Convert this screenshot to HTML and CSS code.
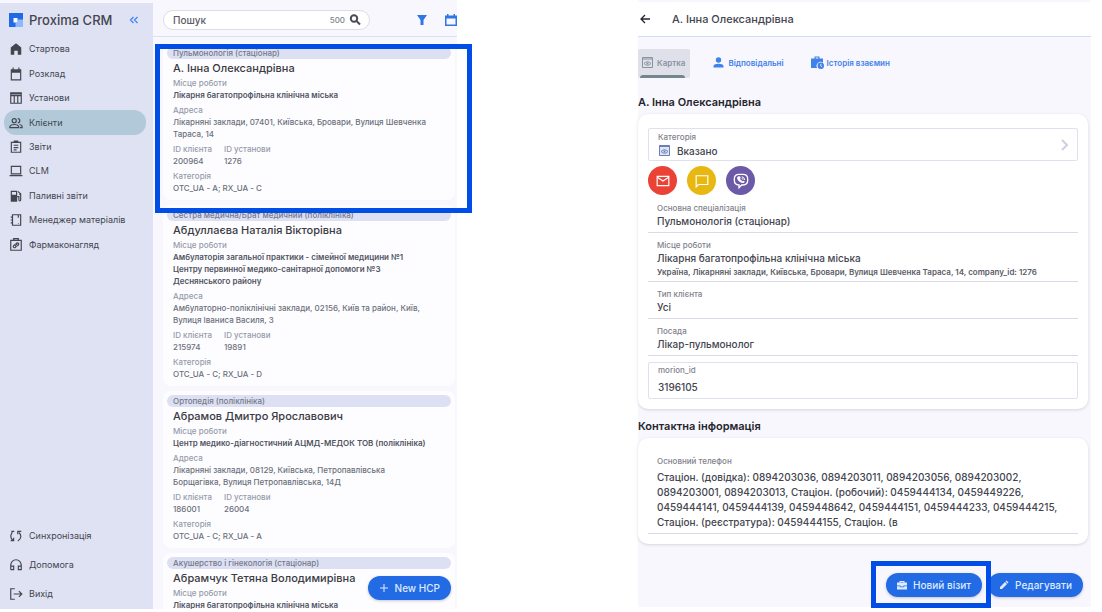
FILE: index.html
```html
<!DOCTYPE html>
<html lang="uk">
<head>
<meta charset="utf-8">
<title>Proxima CRM</title>
<link rel="stylesheet" href="styles.css">
</head>
<body>
<div class="app">
  <aside class="sidebar">
    <div class="brand">
      <svg class="brand-logo" viewBox="0 0 14 14"><path fill="#1f6ae6" d="M0 0h14v14H0z"/><path fill="#8fb8fa" d="M8.500 6.500H14V14H6.500V9.500h2z"/><path fill="#fff" d="M4.500 5h4v4.500h-4z"/></svg>
      <span class="brand-name">Proxima CRM</span>
      <button class="icon-button collapse" aria-label="Згорнути меню"><svg viewBox="0 0 10 10" class="icon-collapse"><path d="M4.500 2 1.500 5l3 3M8.500 2l-3 3 3 3"/></svg></button>
    </div>
    <nav class="menu">
      <a href="#"><svg class="icon" viewBox="0 0 24 24"><path fill="currentColor" d="M3 22V9.500L12 2l9 7.500V22h-6v-7H9v7z"/></svg>Стартова</a>
      <a href="#"><svg class="icon" viewBox="0 0 24 24"><path fill="currentColor" d="M3 4h3V1h2v3h8V1h2v3h3v19H3zm2 6v11h14V10z" fill-rule="evenodd"/></svg>Розклад</a>
      <a href="#"><svg class="icon line" viewBox="0 0 24 24"><path d="M3 3h18v18H3zM3 8h18M9 8v13M15 8v13M3 5h18"/></svg>Установи</a>
      <a href="#" class="active"><svg class="icon line" viewBox="0 0 24 24"><circle cx="9" cy="8" r="3.500"/><path d="M15 4.500a3.500 3.500 0 0 1 0 7M1.500 20v-2.500C3 15 6 14.500 9 14.500s6 .5 7.500 3V20zM18 14.500c2.500.5 4.500 1.500 4.500 3V20h-4"/></svg>Клієнти</a>
      <a href="#"><svg class="icon line" viewBox="0 0 24 24"><path d="M4 4h16v17H4zM9 4V2h6v2M8 9h8M8 13h8M8 17h5"/></svg>Звіти</a>
      <a href="#"><svg class="icon line" viewBox="0 0 24 24"><path d="M4 4h16v13H4zM1 20h22"/></svg>CLM</a>
      <a href="#"><svg class="icon" viewBox="0 0 24 24"><path fill="currentColor" fill-rule="evenodd" d="M3 3h11v19H3zm2 2v5h7V5z"/><path fill="none" stroke="currentColor" stroke-width="2" d="m15 4 5 4v11c0 2-3 2-3 0v-6h-3M20 9h-3"/></svg>Паливні звіти</a>
      <a href="#"><svg class="icon line" viewBox="0 0 24 24"><path d="M6 3h14v18H6zM3 7h4M3 12h4M3 17h4M16 3v5M16 18h1"/></svg>Менеджер матеріалів</a>
      <a href="#"><svg class="icon line" viewBox="0 0 24 24"><path d="M3 4h18v17H3zM8 4V1h8v3"/><path d="m11 11 2-2c2-2 5 1 3 3l-2 2M13 14l-2 2c-2 2-5-1-3-3l2-2M10 14l4-4"/></svg>Фармаконагляд</a>
    </nav>
    <nav class="menu menu-bottom">
      <a href="#"><svg class="icon line" viewBox="0 0 24 24"><path d="M9 4H5v3C2 11 3 16 7 20M3 20h5v-5M15 20h1c5-4 6-9 1-14M15 9V4h6"/></svg>Синхронізація</a>
      <a href="#"><svg class="icon line" viewBox="0 0 24 24"><path d="M3 20v-8a9 9 0 0 1 18 0v8h-5v-6h5M3 14h5v6H3"/></svg>Допомога</a>
      <a href="#"><svg class="icon line" viewBox="0 0 24 24"><path d="M10 3H3v18h7M8 12h13M17 7l5 5-5 5"/></svg>Вихід</a>
    </nav>
  </aside>

  <main class="clients">
    <header class="toolbar">
      <label class="search">
        <input type="text" placeholder="Пошук" aria-label="Пошук">
        <span class="search-count">500</span>
        <svg class="icon-search" viewBox="0 0 12 12"><circle cx="5" cy="4.500" r="3.200"/><path d="m7.500 7 3.500 3.500"/></svg>
      </label>
      <button class="icon-button filter" aria-label="Фільтр"><svg class="icon-filter" viewBox="0 0 12 12"><path fill="currentColor" d="M1 1h10L7.500 6v5h-3V6z"/></svg></button>
      <button class="icon-button calendar" aria-label="Календар"><svg class="icon-calendar" viewBox="0 0 12 12"><path fill="currentColor" fill-rule="evenodd" d="M0 1.500h2V0h1.500v1.500h5V0H10v1.500h2V12H0zm1.500 3v6h9v-6z"/></svg></button>
    </header>
    <div class="list-area">
      <div class="list">
        <article class="client">
          <div class="chip">Пульмонологія (стаціонар)</div>
          <h2>А. Інна Олександрівна</h2>
          <dl>
            <div><dt>Місце роботи</dt><dd class="strong">Лікарня багатопрофільна клінічна міська</dd></div>
            <div><dt>Адреса</dt><dd>Лікарняні заклади, 07401, Київська, Бровари, Вулиця Шевченка Тараса, 14</dd></div>
            <div class="ids"><div><dt>ID клієнта</dt><dd>200964</dd></div><div><dt>ID установи</dt><dd>1276</dd></div></div>
            <div><dt>Категорія</dt><dd>OTC_UA - A; RX_UA - C</dd></div>
          </dl>
        </article>
        <article class="client">
          <div class="chip">Сестра медична/Брат медичний (поліклініка)</div>
          <h2>Абдуллаєва Наталія Вікторівна</h2>
          <dl>
            <div><dt>Місце роботи</dt><dd class="strong">Амбулаторія загальної практики - сімейної медицини №1 Центру первинної медико-санітарної допомоги №3 Деснянського району</dd></div>
            <div><dt>Адреса</dt><dd>Амбулаторно-поліклінічні заклади, 02156, Київ та район, Київ, Вулиця Іваниса Василя, 3</dd></div>
            <div class="ids"><div><dt>ID клієнта</dt><dd>215974</dd></div><div><dt>ID установи</dt><dd>19891</dd></div></div>
            <div><dt>Категорія</dt><dd>OTC_UA - C; RX_UA - D</dd></div>
          </dl>
        </article>
        <article class="client">
          <div class="chip">Ортопедія (поліклініка)</div>
          <h2>Абрамов Дмитро Ярославович</h2>
          <dl>
            <div><dt>Місце роботи</dt><dd class="strong">Центр медико-діагностичний АЦМД-МЕДОК ТОВ (поліклініка)</dd></div>
            <div><dt>Адреса</dt><dd>Лікарняні заклади, 08129, Київська, Петропавлівська Борщагівка, Вулиця Петропавлівська, 14Д</dd></div>
            <div class="ids"><div><dt>ID клієнта</dt><dd>186001</dd></div><div><dt>ID установи</dt><dd>26004</dd></div></div>
            <div><dt>Категорія</dt><dd>OTC_UA - C; RX_UA - A</dd></div>
          </dl>
        </article>
        <article class="client">
          <div class="chip">Акушерство і гінекологія (стаціонар)</div>
          <h2>Абрамчук Тетяна Володимирівна</h2>
          <dl>
            <div><dt>Місце роботи</dt><dd class="strong">Лікарня багатопрофільна клінічна міська</dd></div>
          </dl>
        </article>
      </div>
      <div class="mark mark-client"></div>
      <button class="pill new-client"><svg class="icon-pill" viewBox="0 0 10 10"><path fill="none" stroke="currentColor" d="M5 1v8M1 5h8"/></svg>New HCP</button>
    </div>
  </main>
</div>

<section class="details">
  <header class="details-bar">
    <button class="icon-button" aria-label="Назад"><svg class="icon-back" viewBox="0 0 10 10"><path d="M10 5H1M5 1 1 5l4 4"/></svg></button>
    <h1>А. Інна Олександрівна</h1>
  </header>
  <nav class="tabs">
    <a href="#" class="tab current"><svg class="icon-tab" viewBox="0 0 13 13"><path fill="none" stroke="currentColor" d="M1.500 1.500h10v10h-10zM2 3h9M3 7.500q3.500-3.500 7 0-3.500 3.500-7 0z"/><circle fill="currentColor" cx="6.500" cy="7.500" r="1"/></svg>Картка</a>
    <a href="#" class="tab"><svg class="icon-tab" viewBox="0 0 13 13"><circle fill="currentColor" cx="6.500" cy="4" r="2.700"/><path fill="currentColor" d="M1.500 11.500V10C1.500 7 11.500 7 11.500 10v1.500z"/></svg>Відповідальні</a>
    <a href="#" class="tab"><svg class="icon-tab" viewBox="0 0 13 13"><path fill="currentColor" fill-rule="evenodd" d="M0 2.500h3.500V.5h5v2H12v4.200A4 4 0 0 0 6.200 12H0zm4.700 0h2.600v-1H4.700z"/><circle fill="currentColor" cx="9.800" cy="9.800" r="3.200"/><path fill="none" stroke="#f8f7fd" stroke-width=".8" d="M9.800 8v2l1.300.8"/></svg>Історія взаємин</a>
  </nav>
  <h2 class="section-title">А. Інна Олександрівна</h2>
  <div class="panel">
    <button class="category">
      <span class="field-label">Категорія</span>
      <span class="category-value"><svg class="icon-category" viewBox="0 0 13 13"><path fill="#dfe5f5" d="M1 1h11v11H1z"/><path fill="none" stroke="currentColor" d="M1.500 1.500h10v10h-10zM2 2.500h9M3 7.500q3.500-3.500 7 0-3.500 3.500-7 0z"/><circle fill="currentColor" cx="6.500" cy="7.500" r="1"/></svg>Вказано</span>
      <svg class="icon-next" viewBox="0 0 8 12"><path d="m1 1 5 5-5 5"/></svg>
    </button>
    <div class="channels">
      <button class="channel mail" aria-label="Пошта"><svg viewBox="0 0 24 24"><path d="M2 4h20v16H2zM3 6l9 6 9-6"/></svg></button>
      <button class="channel chat" aria-label="Повідомлення"><svg viewBox="0 0 24 24"><path d="M2 3h20v15H6l-4 4z"/></svg></button>
      <button class="channel viber" aria-label="Viber"><svg viewBox="0 0 24 24"><path d="M9 2h6c5 0 7 2 7 7v2c0 5-2 7-7 7h-2l-4 4v-4c-5 0-7-2-7-7V9c0-5 2-7 7-7z"/><path fill="#fff" stroke="none" d="M8 5c-5 2 1 10 7 10 3 0 3-3 1-3.500l-2 1-3.500-3.500 1-2C11 5 9 4.500 8 5z"/><path stroke-width="1.500" d="M13 5.500q4 .5 4.500 5M13 8q1.800.2 2 2"/></svg></button>
    </div>
    <dl class="fields">
      <div class="field"><dt>Основна спеціалізація</dt><dd>Пульмонологія (стаціонар)</dd></div>
      <div class="field"><dt>Місце роботи</dt><dd>Лікарня багатопрофільна клінічна міська</dd><dd class="note">Україна, Лікарняні заклади, Київська, Бровари, Вулиця Шевченка Тараса, 14, company_id: 1276</dd></div>
      <div class="field"><dt>Тип клієнта</dt><dd>Усі</dd></div>
      <div class="field"><dt>Посада</dt><dd>Лікар-пульмонолог</dd></div>
    </dl>
    <label class="boxed"><span class="field-label">morion_id</span><input type="text" value="3196105"></label>
  </div>
  <h2 class="section-title">Контактна інформація</h2>
  <div class="panel contacts">
    <dl class="fields">
      <div class="field phones"><dt>Основний телефон</dt><dd>Стаціон. (довідка): 0894203036, 0894203011, 0894203056, 0894203002, 0894203001, 0894203013, Стаціон. (робочий): 0459444134, 0459449226, 0459444141, 0459444139, 0459448642, 0459444151, 0459444233, 0459444215, Стаціон. (реєстратура): 0459444155, Стаціон. (в</dd></div>
    </dl>
  </div>
  <footer class="actions">
    <div class="marked"><button class="pill"><svg class="icon-pill" viewBox="0 0 10 10"><path fill="currentColor" fill-rule="evenodd" d="M0 2.500h2.500V1h5v1.500H10v3H6.500v1h-3v-1H0zm3.500 0h3V2h-3zM0 6.200h2.800v1h4.400v-1H10v3.300H0z"/></svg>Новий візит</button><div class="mark mark-visit"></div></div>
    <button class="pill"><svg class="icon-pill" viewBox="0 0 10 10"><path fill="currentColor" d="M1 9V7l5-5 2 2-5 5zM6.500 1.500l1-1 2 2-1 1z"/></svg>Редагувати</button>
  </footer>
</section>
</body>
</html>
```
FILE: styles.css
```css
* { box-sizing: border-box; }

body {
  display: grid;
  grid-template-columns: 457fr 453fr;
  column-gap: 181px;
  height: 100vh;
  margin: 0;
  padding: 0 11px 3px 0;
  overflow: hidden;
  background: #fff;
  color: #43454f;
  font: 500 8px/12px Inter, "Noto Sans", sans-serif;
}

h1, h2, dl, dd { margin: 0; }
a { color: inherit; text-decoration: none; }
button, input { font: inherit; color: inherit; }
svg { display: block; flex: none; fill: none; stroke: none; }

.app {
  display: flex;
  min-width: 0;
  min-height: 0;
  padding-top: 3px;
  background: #f8f7fd;
}

.sidebar {
  display: flex;
  flex-direction: column;
  flex: none;
  width: 153px;
  padding: 0 7px 0 4px;
  background: #dfe2f3;
}

.brand {
  display: flex;
  align-items: center;
  gap: 6px;
  height: 34px;
  padding-left: 5px;
}
.brand-logo { width: 14px; height: 14px; }
.brand-name { font-size: 13px; white-space: nowrap; }

.icon-button { padding: 0; border: 0; background: none; }
.collapse { margin: 0 7px 0 auto; }
.icon-collapse { width: 10px; height: 10px; stroke: #3f86ee; stroke-width: 1.3; }

.menu {
  display: grid;
  grid-auto-rows: 1fr;
  height: 220px;
}
.menu a {
  display: flex;
  align-items: center;
  gap: 6px;
  padding-left: 5px;
  border-radius: 12px;
  font-size: 9px;
  font-weight: 400;
}
.menu .active { background: #b1c9d8; }
.menu-bottom { height: 88px; margin-top: auto; }
.icon { width: 14px; height: 14px; }
.line { stroke: currentColor; stroke-width: 2; }

.clients {
  display: flex;
  flex: 1;
  flex-direction: column;
  min-width: 0;
}
.toolbar {
  display: flex;
  flex: none;
  align-items: center;
  height: 34px;
  padding-left: 10px;
  border-bottom: 1px solid #d4e3f3;
  color: #2f77e6;
}
.search {
  display: flex;
  align-items: center;
  gap: 4px;
  width: 207px;
  height: 20px;
  padding: 0 8px 0 9px;
  border: 1px solid #dcdde5;
  border-radius: 10px;
  background: #fff;
  color: #4a4c56;
}
.search input {
  flex: 1;
  min-width: 0;
  padding: 0;
  border: 0;
  outline: 0;
  background: none;
  font-size: 10px;
}
.search input::placeholder { color: #5a5c66; opacity: 1; }
.search-count { color: #80838e; }
.icon-search { width: 12px; height: 12px; stroke: currentColor; stroke-width: 2; }
.filter { margin-left: auto; }
.calendar { margin-left: 17px; }
.icon-filter, .icon-calendar { width: 12px; height: 12px; }

.list-area { position: relative; flex: 1; min-height: 0; }
.list {
  display: flex;
  flex-direction: column;
  gap: 5px;
  height: 100%;
  padding: 6px 2px 0 10px;
  overflow: hidden;
}
.client {
  flex: none;
  padding: 4px 4px 6px;
  border-radius: 8px;
  background: #fdfdff;
}
.chip {
  padding: 0 6px;
  border-radius: 6px;
  background: #dde0f2;
  color: #74798a;
}
.client h2 { padding-left: 6px; font-size: 11px; line-height: 18px; font-weight: 500; color: #3a3b43; }
.client dl { display: flex; flex-direction: column; gap: 3px; padding: 0 20px 0 6px; }
.client dt { color: #969baa; }
.client dd { color: #6c707c; }
.client .strong { font-weight: 600; color: #50545f; }
.ids { display: flex; gap: 12px; }

.mark { position: absolute; border: 5px solid #004ee6; pointer-events: none; }
.mark-client { top: 7px; left: 2px; right: -15px; height: 169px; }
.mark-visit { inset: -12px -9px -11px -15px; }

.pill {
  display: flex;
  align-items: center;
  gap: 6px;
  height: 24px;
  padding: 0 11px;
  border: 0;
  border-radius: 12px;
  background: #226be5;
  box-shadow: 0 1px 3px #5a5a8055;
  color: #dfeaff;
  font-size: 10px;
  white-space: nowrap;
}
.new-client { position: absolute; right: 6px; bottom: 9px; }
.icon-pill { width: 10px; height: 10px; }

.details {
  display: flex;
  flex-direction: column;
  min-width: 0;
  margin-bottom: 2px;
  background: #f8f7fd;
}
.details-bar {
  display: flex;
  flex: none;
  align-items: center;
  gap: 22px;
  height: 35px;
  margin-top: 2px;
  padding: 0 2px;
  border-bottom: 1px solid #cfdff5;
  background: #fff;
}
.details-bar h1 { font-size: 11px; line-height: 14px; font-weight: 500; }
.icon-back { width: 10px; height: 10px; stroke: #25262e; stroke-width: 1.3; }

.tabs { display: flex; gap: 19px; margin: 12px 0 17px; color: #3f82ea; }
.tab {
  position: relative;
  display: flex;
  align-items: center;
  gap: 3px;
  height: 29px;
  padding: 0 5px 2px 3px;
  font-weight: 600;
}
.current { border-radius: 2px; background: #dfe0ea; color: #87939f; }
.current::after {
  position: absolute;
  right: 5px;
  bottom: 0;
  left: 2px;
  height: 3px;
  border-radius: 3px 3px 0 0;
  background: #72868e;
  content: "";
}
.icon-tab { width: 13px; height: 13px; }

.section-title { font-size: 11px; line-height: 14px; font-weight: 600; color: #25262e; }

.panel {
  display: flex;
  flex-direction: column;
  margin: 5px 3px 10px 0;
  padding: 14px 10px 10px;
  border-radius: 10px;
  background: #fff;
  box-shadow: 0 1px 3px #5a5a8038;
}
.category {
  display: grid;
  grid-template-columns: 1fr auto;
  align-items: center;
  height: 33px;
  padding: 2px 8px 2px 9px;
  border: 1px solid #dfe1ee;
  border-radius: 2px;
  background: #fff;
  text-align: left;
}
.category-value { display: flex; align-items: center; gap: 6px; grid-row: 2; font-size: 10px; line-height: 14px; }
.icon-category { width: 13px; height: 13px; color: #6980b5; }
.icon-next { grid-column: 2; grid-row: 1 / 3; width: 8px; height: 12px; stroke: #ccd1df; stroke-width: 2; }

.channels { display: flex; gap: 10px; margin: 5px 0 7px; }
.channel {
  display: grid;
  place-items: center;
  width: 29px;
  height: 29px;
  padding: 0;
  border: 0;
  border-radius: 50%;
}
.channel svg { width: 14px; height: 14px; stroke: #fff; stroke-width: 2; }
.channel.viber svg { width: 16px; height: 16px; }
.mail { background: #ea4235; }
.chat { background: #e8b812; }
.viber { background: #6c5aa8; }

.fields { display: flex; flex-direction: column; gap: 6px; }
.field { padding: 0 9px 3px; border-bottom: 1px solid #d9dae8; }
.field dt, .field-label { color: #7f828d; line-height: 12px; }
.field dd { font-size: 10px; line-height: 15px; }
.field .note { font-size: 8px; line-height: 12px; font-weight: 600; color: #5a5c66; }

.boxed {
  display: flex;
  flex-direction: column;
  gap: 3px;
  margin-top: 6px;
  padding: 1px 9px 3px;
  border: 1px solid #dfe1ee;
  border-radius: 2px;
}
.boxed input { width: 100%; height: 16px; padding: 0; border: 0; outline: 0; background: none; font-size: 10px; }

.contacts { padding: 17px 10px 10px; }
.phones dt { margin-bottom: 3px; }

.actions { display: flex; justify-content: flex-end; gap: 6px; margin: auto 8px 10px 0; }
.marked { position: relative; z-index: 1; }
```
